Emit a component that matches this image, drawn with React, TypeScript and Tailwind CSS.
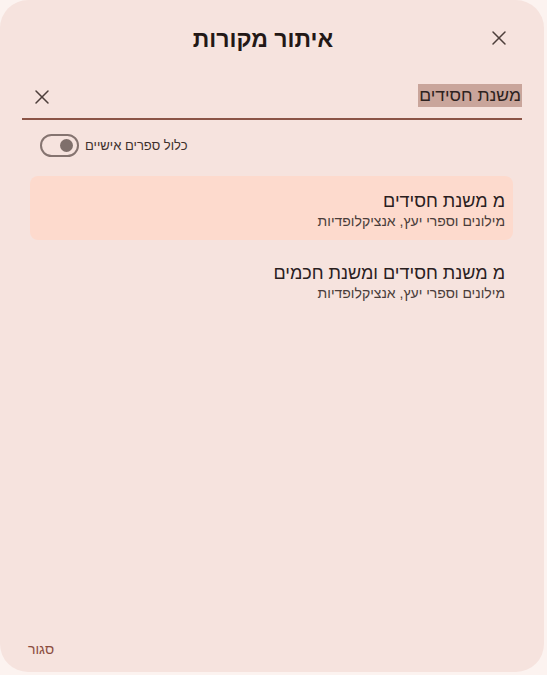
import { X } from 'lucide-react';

const results = [
  { id: 'r1', title: 'מ משנת חסידים', subtitle: 'מילונים וספרי יעץ, אנציקלופדיות', active: true },
  { id: 'r2', title: 'מ משנת חסידים ומשנת חכמים', subtitle: 'מילונים וספרי יעץ, אנציקלופדיות', active: false },
];

export default function App() {
  return (
    <div
      className="h-[675px] w-[547px] bg-[#fcf3f0] overflow-hidden"
      style={{ fontFamily: '"Liberation Sans", "Open Sans", sans-serif' }}
    >
      <div dir="rtl" className="flex h-[672px] w-[544px] flex-col rounded-[28px] bg-[#f6e3de] text-[#2a201e]">
        {/* header */}
        <div className="relative flex h-[76px] items-center justify-center pt-[2px] pr-[18px]">
          <h1 className="text-[23px] font-bold text-[#231816]">איתור מקורות</h1>
          <button className="absolute right-[33px] top-[26px] text-[#4d3f3b]">
            <X className="h-[24px] w-[24px]" strokeWidth={1.5} />
          </button>
        </div>

        {/* search */}
        <div className="mx-[22px] flex h-[44px] items-center border-b-2 border-[#8b5446] pl-[8px]">
          <span className="mb-[4px] bg-[#c9a59b] px-[1px] text-[17.5px] leading-[23px] text-[#2d2220]">משנת חסידים</span>
          <div className="flex-1" />
          <X className="h-[24px] w-[24px] text-[#4d3f3b]" strokeWidth={1.5} />
        </div>

        {/* toggle */}
        <div className="flex items-center justify-end gap-[6px] pl-[40px] pt-[14px]">
          <span className="text-[13px] text-[#3d302d]">כלול ספרים אישיים</span>
          <div className="flex h-[23px] w-[39px] items-center justify-start rounded-full border-2 border-[#857470] px-[4px]">
            <div className="h-[13px] w-[13px] rounded-full bg-[#7f6f6b]" />
          </div>
        </div>

        {/* results */}
        <div className="mt-[19px] flex flex-col gap-[8px] pr-[31px] pl-[30px]">
          {results.map((r) => (
            <div
              key={r.id}
              className={`flex h-[64px] flex-col rounded-[8px] pt-[14px] pr-[8px] ${r.active ? 'bg-[#fddacd]' : ''}`}
            >
              <div className="text-[18px] leading-[22px] text-[#2a201e]">{r.title}</div>
              <div className="text-[14px] leading-[18px] text-[#4a3d3a]">{r.subtitle}</div>
            </div>
          ))}
        </div>

        <div className="flex-1" />

        {/* footer */}
        <div className="flex justify-end pb-[12px] pl-[28px]">
          <button className="text-[14px] text-[#8b4d3e]">סגור</button>
        </div>
      </div>
    </div>
  );
}
